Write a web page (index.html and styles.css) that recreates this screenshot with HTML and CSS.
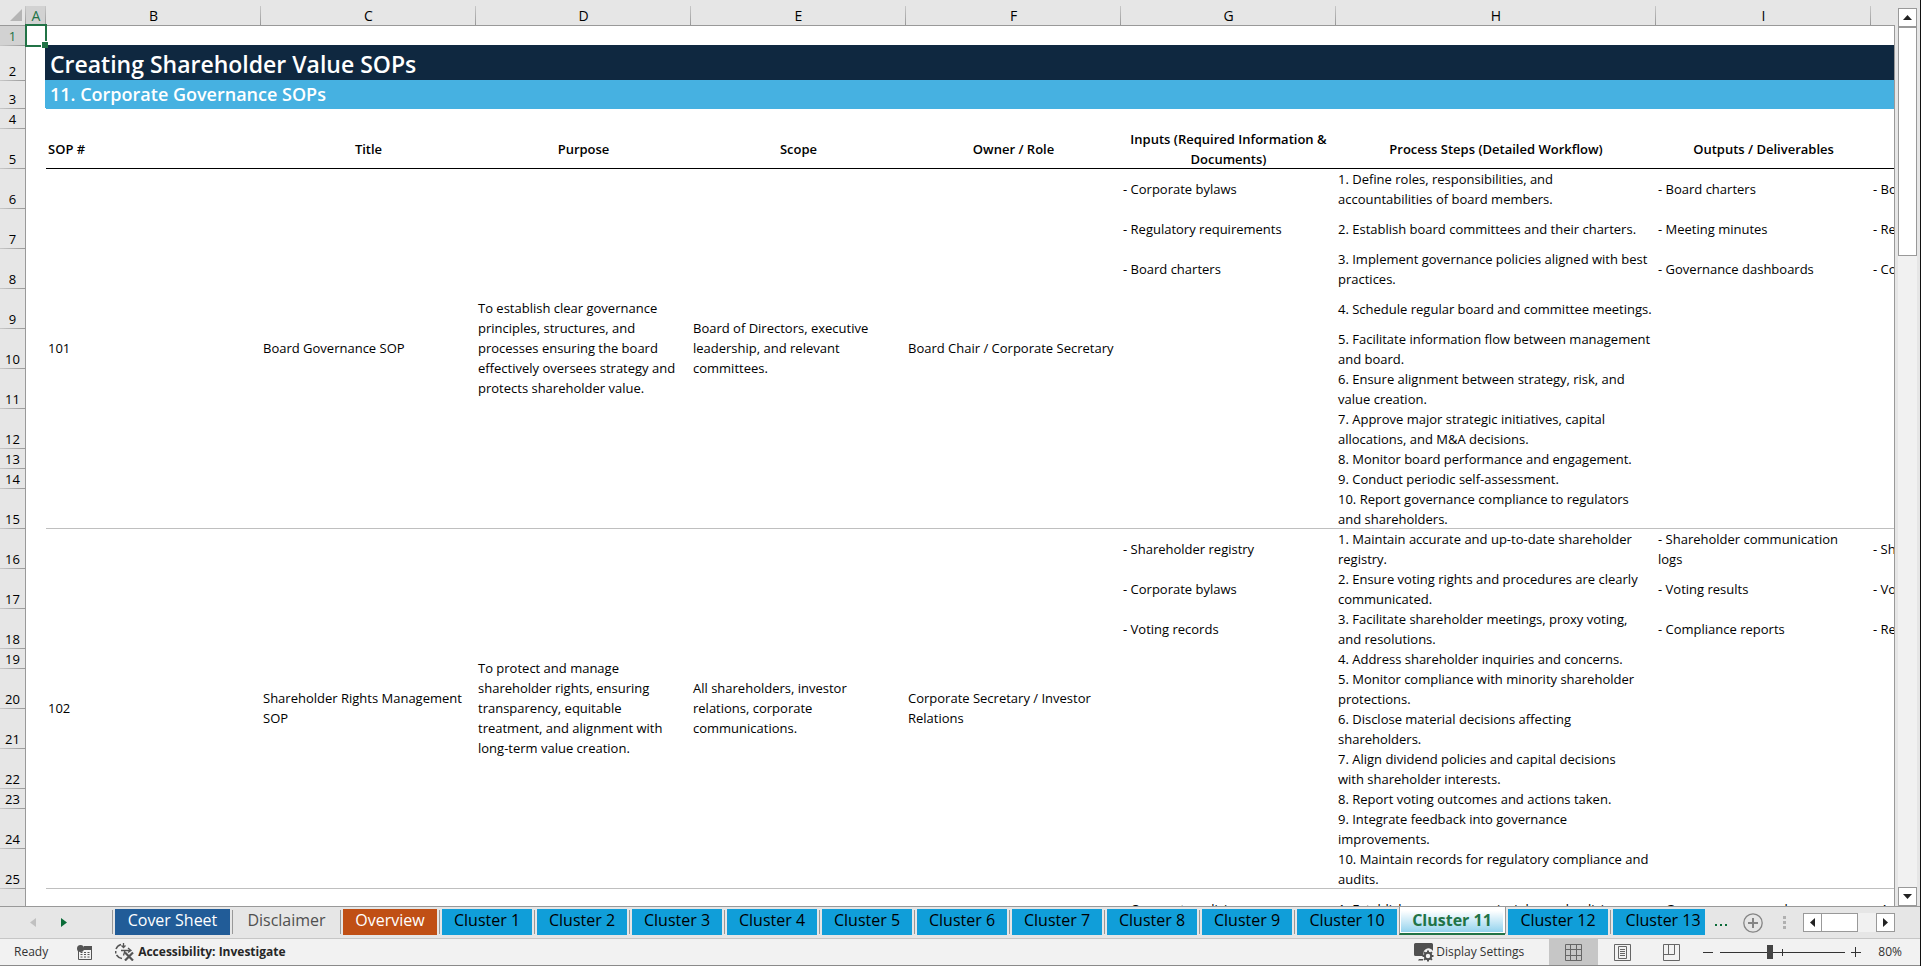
FILE: index.html
```html
<!DOCTYPE html>
<html lang="en">
<head>
<meta charset="utf-8">
<title>Creating Shareholder Value SOPs</title>
<link rel="stylesheet" href="styles.css">
</head>
<body>
<main class="workspace">
  <div class="grid">
    <table class="sheet">
      <colgroup>
        <col class="col-num"><col class="col-a"><col class="col-std"><col class="col-std"><col class="col-std"><col class="col-std"><col class="col-std"><col class="col-std"><col class="col-wide"><col class="col-std"><col class="col-std">
      </colgroup>
      <thead>
        <tr class="letters">
          <th class="corner"><svg width="12" height="12" viewBox="0 0 12 12" aria-hidden="true"><path d="M12 0v12H0z" fill="#b5b5b5"/></svg></th>
          <th class="selected">A</th><th>B</th><th>C</th><th>D</th><th>E</th><th>F</th><th>G</th><th>H</th><th>I</th><th></th>
        </tr>
      </thead>
      <tbody>
        <tr class="h20"><th class="num selected">1</th><td class="active-cell"><span class="cursor"></span></td><td colspan="9"></td></tr>
        <tr class="h35"><th class="num">2</th><td></td><td class="title" colspan="9">Creating Shareholder Value SOPs</td></tr>
        <tr class="h28"><th class="num">3</th><td></td><td class="subtitle" colspan="9">11. Corporate Governance SOPs</td></tr>
        <tr class="h20"><th class="num">4</th><td></td><td colspan="9"></td></tr>
        <tr class="h40 heads"><th class="num">5</th><td></td><th class="first">SOP #</th><th>Title</th><th>Purpose</th><th>Scope</th><th>Owner / Role</th><th>Inputs (Required Information &amp; Documents)</th><th>Process Steps (Detailed Workflow)</th><th>Outputs / Deliverables</th><th></th></tr>

        <tr class="h40"><th class="num">6</th><td></td>
          <td class="merged" rowspan="10">101</td>
          <td class="merged" rowspan="10">Board Governance SOP</td>
          <td class="merged" rowspan="10">To establish clear governance principles, structures, and processes ensuring the board effectively oversees strategy and protects shareholder value.</td>
          <td class="merged" rowspan="10">Board of Directors, executive leadership, and relevant committees.</td>
          <td class="merged" rowspan="10">Board Chair / Corporate Secretary</td>
          <td>- Corporate bylaws</td><td>1. Define roles, responsibilities, and<br>accountabilities of board members.</td><td>- Board charters</td><td>- Board</td></tr>
        <tr class="h40"><th class="num">7</th><td></td><td>- Regulatory requirements</td><td>2. Establish board committees and their charters.</td><td>- Meeting minutes</td><td>- Regulators</td></tr>
        <tr class="h40"><th class="num">8</th><td></td><td>- Board charters</td><td>3. Implement governance policies aligned with best practices.</td><td>- Governance dashboards</td><td>- Committees</td></tr>
        <tr class="h40"><th class="num">9</th><td></td><td></td><td>4. Schedule regular board and committee meetings.</td><td></td><td></td></tr>
        <tr class="h40"><th class="num">10</th><td></td><td></td><td>5. Facilitate information flow between management and board.</td><td></td><td></td></tr>
        <tr class="h40"><th class="num">11</th><td></td><td></td><td>6. Ensure alignment between strategy, risk, and value creation.</td><td></td><td></td></tr>
        <tr class="h40"><th class="num">12</th><td></td><td></td><td>7. Approve major strategic initiatives, capital allocations, and M&amp;A decisions.</td><td></td><td></td></tr>
        <tr class="h20"><th class="num">13</th><td></td><td></td><td>8. Monitor board performance and engagement.</td><td></td><td></td></tr>
        <tr class="h20"><th class="num">14</th><td></td><td></td><td>9. Conduct periodic self-assessment.</td><td></td><td></td></tr>
        <tr class="h40 last"><th class="num">15</th><td class="plain"></td><td></td><td>10. Report governance compliance to regulators and shareholders.</td><td></td><td></td></tr>

        <tr class="h40"><th class="num">16</th><td></td>
          <td class="merged" rowspan="10">102</td>
          <td class="merged" rowspan="10">Shareholder Rights Management SOP</td>
          <td class="merged" rowspan="10">To protect and manage shareholder rights, ensuring transparency, equitable treatment, and alignment with long-term value creation.</td>
          <td class="merged" rowspan="10">All shareholders, investor relations, corporate communications.</td>
          <td class="merged" rowspan="10">Corporate Secretary / Investor Relations</td>
          <td>- Shareholder registry</td><td>1. Maintain accurate and up-to-date shareholder registry.</td><td>- Shareholder communication<br>logs</td><td>- Shareholders</td></tr>
        <tr class="h40"><th class="num">17</th><td></td><td>- Corporate bylaws</td><td>2. Ensure voting rights and procedures are clearly communicated.</td><td>- Voting results</td><td>- Voting</td></tr>
        <tr class="h40"><th class="num">18</th><td></td><td>- Voting records</td><td>3. Facilitate shareholder meetings, proxy voting,<br>and resolutions.</td><td>- Compliance reports</td><td>- Regulators</td></tr>
        <tr class="h20"><th class="num">19</th><td></td><td></td><td>4. Address shareholder inquiries and concerns.</td><td></td><td></td></tr>
        <tr class="h40"><th class="num">20</th><td></td><td></td><td>5. Monitor compliance with minority shareholder protections.</td><td></td><td></td></tr>
        <tr class="h40"><th class="num">21</th><td></td><td></td><td>6. Disclose material decisions affecting shareholders.</td><td></td><td></td></tr>
        <tr class="h40"><th class="num">22</th><td></td><td></td><td>7. Align dividend policies and capital decisions<br>with shareholder interests.</td><td></td><td></td></tr>
        <tr class="h20"><th class="num">23</th><td></td><td></td><td>8. Report voting outcomes and actions taken.</td><td></td><td></td></tr>
        <tr class="h40"><th class="num">24</th><td></td><td></td><td>9. Integrate feedback into governance improvements.</td><td></td><td></td></tr>
        <tr class="h40 last"><th class="num">25</th><td class="plain"></td><td></td><td>10. Maintain records for regulatory compliance and audits.</td><td></td><td></td></tr>
        <tr class="h40"><th class="num"></th><td></td><td></td><td></td><td></td><td></td><td></td><td>- Corporate policies</td><td>1. Establish governance principles and policies.</td><td>- Governance manual</td><td>- Audit</td></tr>
      </tbody>
    </table>
  </div>
  <div class="gutter">
    <div class="vscroll">
      <button class="sbtn" aria-label="Scroll up"><svg width="9" height="5" viewBox="0 0 9 5"><path d="M4.500 0L9 5H0z" fill="#222"/></svg></button>
      <div class="vthumb"></div>
      <button class="sbtn down" aria-label="Scroll down"><svg width="9" height="5" viewBox="0 0 9 5"><path d="M0 0h9L4.500 5z" fill="#222"/></svg></button>
    </div>
  </div>
</main>

<nav class="tabbar" aria-label="Sheets">
  <div class="arrows">
    <button class="bare" aria-label="Previous sheets"><svg width="6" height="9" viewBox="0 0 6 9"><path d="M6 0v9L0 4.500z" fill="#c0c0c0"/></svg></button>
    <button class="bare" aria-label="Next sheets"><svg width="6" height="9" viewBox="0 0 6 9"><path d="M0 0v9l6-4.500z" fill="#0a6b38"/></svg></button>
  </div>
  <div class="tabs">
    <div class="slot"><button class="tab navy">Cover Sheet</button></div>
    <div class="slot"><button class="tab plain">Disclaimer</button></div>
    <div class="slot"><button class="tab orange">Overview</button></div>
    <div class="slot"><button class="tab short">Cluster 1</button></div>
    <div class="slot"><button class="tab short">Cluster 2</button></div>
    <div class="slot"><button class="tab short">Cluster 3</button></div>
    <div class="slot"><button class="tab short">Cluster 4</button></div>
    <div class="slot"><button class="tab short">Cluster 5</button></div>
    <div class="slot"><button class="tab short">Cluster 6</button></div>
    <div class="slot"><button class="tab short">Cluster 7</button></div>
    <div class="slot"><button class="tab short">Cluster 8</button></div>
    <div class="slot"><button class="tab short">Cluster 9</button></div>
    <div class="slot"><button class="tab long">Cluster 10</button></div>
    <div class="slot current"><button class="tab long">Cluster 11</button></div>
    <div class="slot after"><button class="tab long">Cluster 12</button></div>
    <div class="slot"><button class="tab long">Cluster 13</button></div>
  </div>
  <div class="tabtools">
    <button class="bare" aria-label="More sheets"><svg width="12" height="2" viewBox="0 0 12 2"><path d="M0 0h2v2H0zM5 0h2v2H5zM10 0h2v2h-2z" fill="#0a6b38"/></svg></button>
    <button class="bare plus" aria-label="New sheet"><svg width="20" height="20" viewBox="0 0 20 20" fill="none" stroke="#858585"><circle cx="10" cy="10" r="9.200" stroke-width="1.300"/><path d="M10 5v10M5 10h10" stroke-width="2"/></svg></button>
    <svg class="grip" width="3" height="13" viewBox="0 0 3 13" aria-hidden="true"><path d="M0 0h3v3H0zM0 5h3v3H0zM0 10h3v3H0z" fill="#b0b0b0"/></svg>
    <div class="hscroll">
      <button class="sbtn" aria-label="Scroll left"><svg width="5" height="9" viewBox="0 0 5 9"><path d="M5 0v9L0 4.500z" fill="#222"/></svg></button>
      <div class="hthumb"></div>
      <button class="sbtn right" aria-label="Scroll right"><svg width="5" height="9" viewBox="0 0 5 9"><path d="M0 0v9l5-4.500z" fill="#222"/></svg></button>
    </div>
  </div>
</nav>

<footer class="status">
  <span class="ready">Ready</span>
  <button class="bare macro" aria-label="Record macro"><svg width="15" height="15" viewBox="0 0 15 15"><path d="M7 1h8v4H6z" fill="#555"/><path d="M1.500 6v8.500h13V4" fill="none" stroke="#555"/><path d="M3.500 7.500h2m1.500 0h2m1.500 0h2M3.500 9.500h2m1.500 0h2m1.500 0h2M3.500 12h2m1.500 0h2m1.500 0h2" stroke="#555"/><circle cx="3.500" cy="3.500" r="3.500" fill="#555"/></svg></button>
  <button class="bare access"><svg width="20" height="18" viewBox="0 0 20 18" fill="none" stroke="#555"><path d="M6 1.500A7.500 7.500 0 0 0 1 6M.7 8v2.500M1.500 12A8 8 0 0 0 7 15.500" stroke-width="1.500"/><path d="M8.500 0v4M6.500 2.500l2 2 2-2M6 7.500h4l-1.500 5M10 7.500h5M13 5l3 2.500-3 2" stroke-width="1.300"/><path d="M10 9.500l8 8M18 9.500l-8 8" stroke-width="2.200"/></svg>Accessibility: Investigate</button>
  <div class="right">
    <button class="bare display"><svg width="20" height="19" viewBox="0 0 20 19"><path d="M1.500 0h16A1.500 1.500 0 0 1 19 1.500V8a5 5 0 0 0-9 5H1.500A1.500 1.500 0 0 1 0 11.500v-10A1.500 1.500 0 0 1 1.500 0zM5 16h4v1.500H4z" fill="#505050"/><circle cx="14" cy="13" r="3.200" fill="none" stroke="#505050" stroke-width="2"/><path d="M14 7.500v2M14 16.500v2M8.500 13h2M17.500 13h2M10.100 9.100l1.500 1.500M16.400 15.400l1.500 1.500M17.900 9.100l-1.500 1.500M11.600 15.400l-1.500 1.500" stroke="#505050" stroke-width="2"/></svg>Display Settings</button>
    <div class="views">
      <button class="view on" aria-label="Normal"><svg width="17" height="17" viewBox="0 0 17 17" fill="none" stroke="#666"><path d="M.5.5h16v16H.5zM.5 5.500h16M.5 11.500h16M5.500.5v16M11.500.5v16"/></svg></button>
      <button class="view" aria-label="Page layout"><svg width="17" height="17" viewBox="0 0 17 17" fill="none" stroke="#666"><path d="M.5.5h16v16H.5zM4.500 2.500h8v12h-8zM6 5.500h5M6 7.500h5M6 9.500h5M6 11.500h5"/></svg></button>
      <button class="view" aria-label="Page break preview"><svg width="17" height="17" viewBox="0 0 17 17" fill="none" stroke="#666"><path d="M.5.5h16v16H.5zM.5 10.500h11M5.500.5v10M11.500.5v10"/></svg></button>
    </div>
    <button class="bare" aria-label="Zoom out"><svg width="10" height="10" viewBox="0 0 10 10"><path d="M0 5.500h10" stroke="#333"/></svg></button>
    <input class="zoom" type="range" min="0" max="100" value="39" aria-label="Zoom">
    <button class="bare" aria-label="Zoom in"><svg width="10" height="10" viewBox="0 0 10 10"><path d="M0 5.500h10M4.500 0v10" stroke="#333"/></svg></button>
    <button class="bare percent">80%</button>
  </div>
</footer>
</body>
</html>
```
FILE: styles.css
```css
* { box-sizing: border-box; }

body {
  margin: 0;
  height: 100vh;
  display: flex;
  flex-direction: column;
  overflow: hidden;
  border-right: 1px solid #111;
  background: #e6e6e6;
  font-family: "Open Sans", "Noto Sans", sans-serif;
  font-size: 13px;
  line-height: 20px;
  color: #000;
}

button {
  font: inherit;
  color: inherit;
  margin: 0;
  padding: 0;
  border: 0;
  background: none;
}

svg { display: block; flex: none; }

.bare { display: flex; align-items: center; }

/* Worksheet */
.workspace { flex: 1; min-height: 0; display: flex; }
.grid { flex: 1; min-width: 0; overflow: hidden; background: #fff; }

.sheet {
  table-layout: fixed;
  border-collapse: separate;
  border-spacing: 0;
  width: 2086px;
}
.col-num { width: 26px; }
.col-a { width: 20px; }
.col-std { width: 215px; }
.col-wide { width: 320px; }

.sheet td, .sheet th { padding: 0 2px; vertical-align: middle; }
.sheet td { text-align: left; }

.letters { height: 26px; }
.sheet .letters th {
  padding: 6px 0 0;
  font-size: 14px;
  font-weight: 400;
  line-height: 19px;
  border-bottom: 1px solid #999;
  background: linear-gradient(#c8c8c8, #999) right bottom / 1px 19px no-repeat #e6e6e6;
}
.sheet .letters .corner { padding: 5px 3px 0 10px; }
.sheet .letters .selected { color: #217346; background: linear-gradient(#c8c8c8, #999) right bottom / 1px 19px no-repeat, linear-gradient(#d2d2d2, #d2d2d2) right bottom / 100% 19px no-repeat #e6e6e6; }

.sheet .num {
  padding: 0;
  font-weight: 400;
  text-align: center;
  vertical-align: bottom;
  border-right: 1px solid #999;
  background: linear-gradient(90deg, #c8c8c8, #999) left bottom / 100% 1px no-repeat #e6e6e6;
}
.sheet .num.selected { color: #217346; background-color: #d2d2d2; }

.h20 { height: 20px; }
.h28 { height: 28px; }
.h35 { height: 35px; }
.h40 { height: 40px; }

.sheet .title, .sheet .subtitle { padding: 0 4px; color: #fff; font-weight: 600; }
.sheet .title { font-size: 23px; line-height: 34px; background: #0f2840; box-shadow: -1px -1px #0f2840; }
.sheet .subtitle { padding-bottom: 2px; font-size: 18px; line-height: 26px; background: #46b1e1; box-shadow: -1px -1px #46b1e1; }

.heads th { font-weight: 600; box-shadow: inset 0 -1px #000; }
.heads .num { box-shadow: none; }
.sheet .heads .first { text-align: left; }

.last td, .merged { box-shadow: inset 0 -1px #bfbfbf; }
.last .plain { box-shadow: none; }
.sheet .merged { padding-bottom: 3px; }

.active-cell { position: relative; z-index: 2; }
.cursor { position: absolute; inset: -2px -1px -1px; border: 2px solid #217346; }
.cursor::after {
  content: "";
  position: absolute;
  right: -3px;
  bottom: -3px;
  width: 6px;
  height: 6px;
  border: solid #fff;
  border-width: 1px 0 0 1px;
  background: #217346;
}

/* Scroll bars */
.gutter {
  width: 26px;
  padding: 8px 3px 0 4px;
  display: flex;
  background: linear-gradient(#999, #999) 0 25px / 1px 100% no-repeat;
}
.vscroll { flex: 1; display: flex; flex-direction: column; background: #f1f1f1; }
.sbtn {
  flex: none;
  width: 19px;
  height: 19px;
  display: flex;
  align-items: center;
  justify-content: center;
  border: 1px solid #999;
  background: #fff;
}
.vthumb { height: 229px; border: 1px solid #999; background: #fff; }
.down { margin-top: auto; }

/* Sheet tabs */
.tabbar {
  display: flex;
  height: 33px;
  border-top: 1px solid #999;
  border-bottom: 1px solid #c6c6c6;
}
.arrows { width: 112px; padding: 0 45px 0 30px; display: flex; justify-content: space-between; align-items: center; flex: none; }
.tabs { flex: 1; min-width: 0; display: flex; overflow: hidden; }
.slot {
  flex: none;
  padding: 2px 2px 0;
  border-left: 1px solid transparent;
  background: linear-gradient(#999, #999) left 3px / 1px 24px no-repeat;
  background-origin: border-box;
}
.tab {
  height: 26px;
  padding: 0 0 4px;
  font-size: 16px;
  line-height: 22px;
  display: block;
  white-space: nowrap;
  background: #109ed9;
}
.navy { width: 115px; background: #215c98; color: #fff; }
.orange { width: 94px; background: #c04f15; color: #fff; }
.tab.plain { width: 103px; background: none; color: #505050; }
.short { width: 90px; }
.long { width: 100px; }
.current {
  height: 28px;
  padding: 0;
  border-left: 1px solid #999;
  border-bottom: 2px solid #217346;
  background: #fff;
}
.current .tab {
  width: 105px;
  height: 26px;
  padding: 0;
  font-weight: 700;
  color: #217346;
  border: solid #fff;
  border-width: 0 2px 1px 1px;
  background: linear-gradient(#fff 15%, #94d3ee);
}
.current + .slot { background: linear-gradient(#999, #999) left top / 1px 27px no-repeat; background-origin: border-box; }

.tabtools { flex: none; display: flex; align-items: center; padding: 0 25px 0 10px; }
.tabtools .bare:first-child { padding-top: 4px; }
.plus { margin: 0 20px 0 16px; }
.grip { margin-right: 17px; }
.hscroll { width: 92px; display: flex; background: #f1f1f1; }
.hthumb { width: 36px; border: 1px solid #999; border-left: 0; background: #fff; }
.right.sbtn { margin-left: auto; }

/* Status bar */
.status {
  display: flex;
  align-items: center;
  height: 27px;
  padding: 0 18px 0 14px;
  border-bottom: 1px solid #8a8a8a;
  background: #f2f2f2;
  font-size: 12px;
  color: #333;
}
.macro { margin: 0 23px 0 29px; }
.access { gap: 3px; font-weight: 700; color: #262626; }
.status .right { margin-left: auto; display: flex; align-items: center; }
.display { gap: 2px; }
.views { display: flex; margin: 0 7px 0 25px; }
.view { width: 49px; height: 26px; display: flex; align-items: center; justify-content: center; }
.view.on { background: #c6c6c6; }
.zoom {
  appearance: none;
  width: 125px;
  height: 14px;
  margin: 0 6px 0 7px;
  background:
    linear-gradient(#333, #333) center / 100% 1px no-repeat,
    linear-gradient(#333, #333) center / 1px 7px no-repeat;
}
.zoom::-webkit-slider-thumb { appearance: none; width: 6px; height: 14px; background: #444; }
.percent { margin-left: 17px; }
```
